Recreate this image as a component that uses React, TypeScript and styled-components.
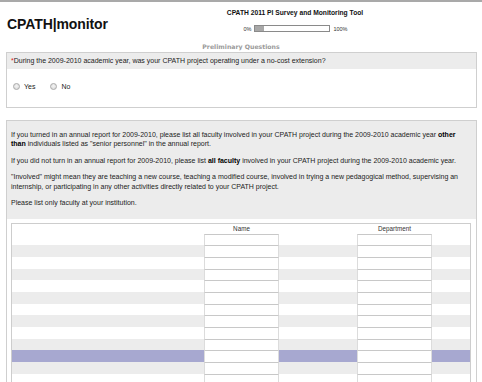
import React from "react";
import styled, { createGlobalStyle } from "styled-components";

const Global = createGlobalStyle`
  html, body { margin: 0; padding: 0; background: #ffffff; }
  body { font-family: "Liberation Sans", Arial, sans-serif; color: #222; }
  * { box-sizing: border-box; }
`;

const Page = styled.div`
  width: 482px;
  height: 382px;
  overflow: hidden;
  border-top: 2px solid #a9a9a9;
`;

const Header = styled.header`
  display: flex;
  align-items: flex-start;
  padding-left: 7px;
  height: 40px;
`;

const Logo = styled.div`
  width: 204px;
  margin-top: 14px;
  font-size: 14px;
  line-height: 16px;
  font-weight: bold;
  color: #111;
  letter-spacing: -0.1px;
`;

const TitleBlock = styled.div`
  width: 168px;
  display: flex;
  flex-direction: column;
  align-items: center;
  padding-top: 6px;
`;

const Title = styled.div`
  font-size: 6.7px;
  line-height: 9px;
  font-weight: bold;
  color: #111;
  white-space: nowrap;
`;

const ProgressRow = styled.div`
  display: flex;
  align-items: center;
  gap: 3px;
  margin-top: 8px;
  margin-left: 1px;
  font-size: 5.5px;
  color: #333;
`;

const Track = styled.div`
  width: 76px;
  height: 7px;
  border: 1px solid #8a8a8a;
  background: #fff;
  display: flex;
`;

const Fill = styled.div`
  height: 100%;
  background: #a8a8a8;
`;

const Section = styled.div`
  text-align: center;
  font-family: "DejaVu Sans", Verdana, sans-serif;
  font-size: 6.2px;
  font-weight: bold;
  line-height: 8px;
  color: #9a9a9a;
  height: 10px;
  padding-top: 1px;
`;

const Box = styled.section<{ $gap?: number }>`
  margin: ${(p) => p.$gap ?? 0}px 5px 0 6px;
  border: 1px solid #cfcfcf;
  background: #fff;
`;

const BoxHead = styled.div<{ $pad: string }>`
  background: #ececec;
  padding: ${(p) => p.$pad};
  font-size: 7px;
  line-height: 9.5px;
  color: #222;
`;

const Req = styled.span`
  color: #d22;
`;

const RadioRow = styled.div`
  display: flex;
  align-items: center;
  height: 38px;
  padding-left: 6px;
  padding-bottom: 3px;
  gap: 15px;
  font-size: 7px;
`;

const RadioLabel = styled.label`
  display: flex;
  align-items: center;
  gap: 4px;
`;

const RadioDot = styled.span`
  width: 7px;
  height: 7px;
  border-radius: 50%;
  border: 1px solid #a9a9a9;
  background: radial-gradient(circle at 50% 40%, #f4f4f4, #d6d6d6);
`;

const Para = styled.p`
  margin: 0 0 7px;
  &:last-child { margin-bottom: 0; }
  b { color: #000; }
`;

const BoxBody = styled.div`
  padding: 4px 5px 0 4px;
`;

const Table = styled.div`
  border: 1px solid #cdcdcd;
  border-bottom: none;
  height: 200px;
`;

const Grid = styled.div<{ $bg: string; $h: number }>`
  display: grid;
  grid-template-columns: 192px 75px 78px 75px 1fr;
  align-items: stretch;
  height: ${(p) => p.$h}px;
  background: ${(p) => p.$bg};
`;

const HeadCell = styled.div`
  font-size: 6.3px;
  line-height: 9px;
  text-align: center;
  color: #333;
`;

const Field = styled.input`
  display: block;
  width: 75px;
  height: 100%;
  margin: 0;
  padding: 0;
  border: 1px solid #dcdcdc;
  border-top-color: #c8c8c8;
  background: #fff;
  outline: none;
`;

const rowBg = (i: number) => (i === 10 ? "#a7a8d0" : i % 2 === 1 ? "#ececec" : "#ffffff");

export default function App() {
  const rows = Array.from({ length: 14 }, (_, i) => i);
  return (
    <Page>
      <Global />
      <Header>
        <Logo>CPATH|monitor</Logo>
        <TitleBlock>
          <Title>CPATH 2011 PI Survey and Monitoring Tool</Title>
          <ProgressRow>
            <span>0%</span>
            <Track>
              <Fill style={{ width: "12%" }} />
            </Track>
            <span>100%</span>
          </ProgressRow>
        </TitleBlock>
      </Header>
      <Section>Preliminary Questions</Section>
      <Box>
        <BoxHead $pad="3px 4px 3px 4px">
          <Req>*</Req>During the 2009-2010 academic year, was your CPATH project operating under a no-cost extension?
        </BoxHead>
        <RadioRow>
          <RadioLabel>
            <RadioDot />
            Yes
          </RadioLabel>
          <RadioLabel>
            <RadioDot />
            No
          </RadioLabel>
        </RadioRow>
      </Box>
      <Box $gap={12}>
        <BoxHead $pad="9px 8px 11px 4px">
          <Para>
            If you turned in an annual report for 2009-2010, please list all faculty involved in your CPATH project during the
            2009-2010 academic year <b>other than</b> individuals listed as "senior personnel" in the annual report.
          </Para>
          <Para>
            If you did not turn in an annual report for 2009-2010, please list <b>all faculty</b> involved in your CPATH project
            during the 2009-2010 academic year.
          </Para>
          <Para>
            "Involved" might mean they are teaching a new course, teaching a modified course, involved in trying a new
            pedagogical method, supervising an internship, or participating in any other activities directly related to your
            CPATH project.
          </Para>
          <Para>Please list only faculty at your institution.</Para>
        </BoxHead>
        <BoxBody>
          <Table>
            <Grid $bg="#ffffff" $h={10}>
              <span />
              <HeadCell>Name</HeadCell>
              <span />
              <HeadCell>Department</HeadCell>
              <span />
            </Grid>
            {rows.map((i) => (
              <Grid key={i} $bg={rowBg(i)} $h={11.7}>
                <span />
                <Field />
                <span />
                <Field />
                <span />
              </Grid>
            ))}
          </Table>
        </BoxBody>
      </Box>
    </Page>
  );
}
